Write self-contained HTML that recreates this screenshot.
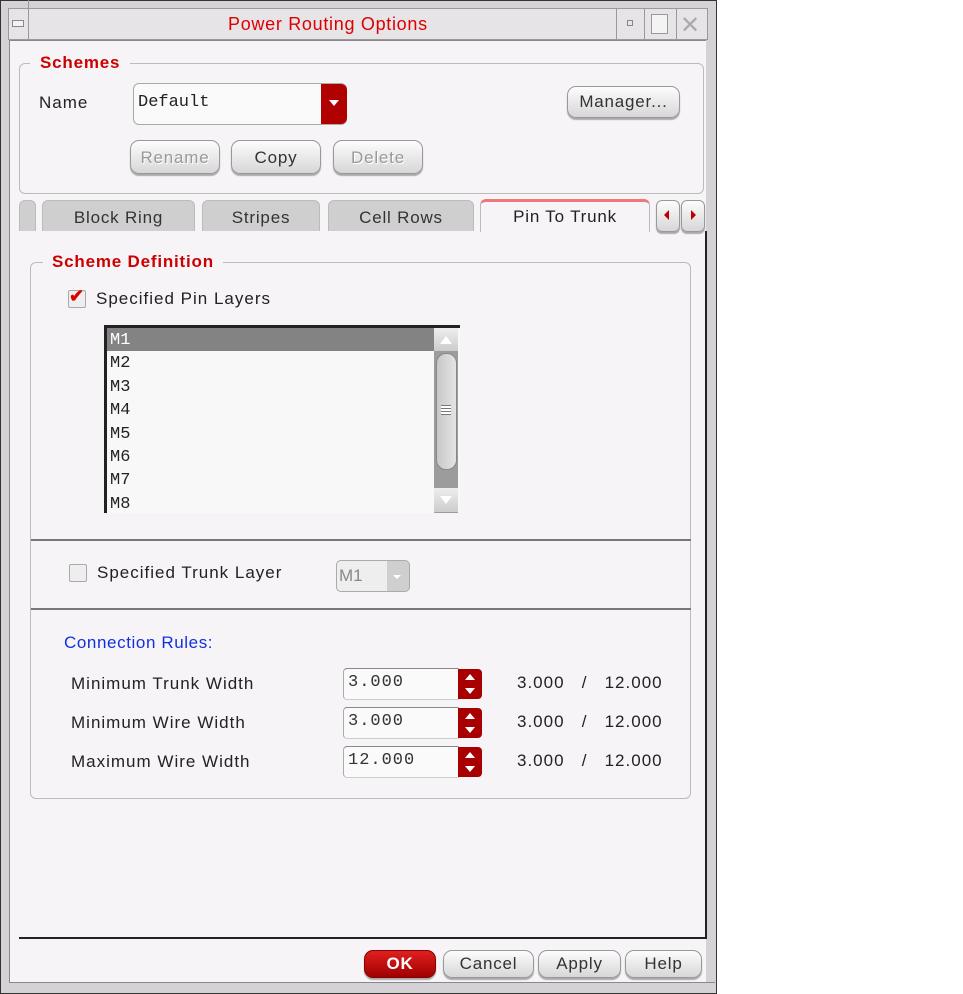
<!DOCTYPE html>
<html><head><style>
*{margin:0;padding:0;box-sizing:border-box}
body{width:963px;height:994px;background:#fff;position:relative;font-family:"Liberation Sans",sans-serif;overflow:hidden}
.a{position:absolute}
.win{left:0;top:0;width:717px;height:994px;background:#d4d2d4;border:1px solid #333}
.inner{left:9px;top:40px;width:697px;height:943px;background:#f7f4f7;border-left:1px solid #888;border-top:1px solid #888}
.t{font-size:17px;color:#222;white-space:nowrap;letter-spacing:1px}
.red{color:#cc0000;font-weight:bold;font-size:17px;letter-spacing:0.8px}
.btn{border:1px solid #999;border-radius:9px;background:linear-gradient(#fdfdfd,#d8d6d8);box-shadow:0 2px 1px #aaa;text-align:center;font-size:17px;color:#333;line-height:30px;letter-spacing:0.8px}
.dis{color:#999;text-shadow:1px 1px 0 #fff}
.tab{background:#d0cfd0;border:1px solid #bbb;border-bottom:none;border-radius:6px 6px 0 0;text-align:center;font-size:17px;color:#333;line-height:34px;letter-spacing:0.8px}
.grp{border:1px solid #bbb;border-radius:6px}
.mono{font-family:"Liberation Mono",monospace}
.spin{width:24px;height:30px;background:#a80000;border-radius:0 4px 4px 0}
.spin:before{content:"";position:absolute;left:7px;top:5px;border-left:5px solid transparent;border-right:5px solid transparent;border-bottom:6px solid #fff}
.spin:after{content:"";position:absolute;left:7px;top:19px;border-left:5px solid transparent;border-right:5px solid transparent;border-top:6px solid #fff}
.field{width:116px;height:32px;background:#fbfafb;border:1px solid #ccc;border-top-color:#888;border-left-color:#aaa;border-radius:4px 0 0 4px;font-size:17px;color:#333;padding:4px 0 0 4px;letter-spacing:1px}
</style></head><body>
<div class="a win"></div>
<div class="a" style="left:8px;top:8px;width:700px;height:32px;background:#e6e4e6;border:1px solid #999"></div>
<div class="a" style="left:28px;top:0;width:1px;height:40px;background:#999"></div>
<div class="a" style="left:12px;top:20px;width:12px;height:7px;border:1px solid #888;background:#f3f3f3"></div>
<div class="a" style="left:228px;top:14px;color:#d00;font-size:18px;letter-spacing:0.7px">Power Routing Options</div>
<div class="a" style="left:616px;top:8px;width:1px;height:32px;background:#999"></div>
<div class="a" style="left:627px;top:20px;width:6px;height:6px;border:1px solid #888"></div>
<div class="a" style="left:644px;top:8px;width:1px;height:32px;background:#999"></div>
<div class="a" style="left:651px;top:14px;width:17px;height:20px;border:1px solid #999;background:#f3f3f3"></div>
<div class="a" style="left:676px;top:8px;width:1px;height:32px;background:#999"></div>
<div class="a" style="left:680px;top:11px;font-size:24px;color:#aaa">✕</div>
<div class="a inner"></div>
<div class="a grp" style="left:19px;top:63px;width:685px;height:131px"></div>
<div class="a red" style="left:30px;top:53px;background:#f7f4f7;padding:0 10px">Schemes</div>
<div class="a t" style="left:39px;top:93px">Name</div>
<div class="a" style="left:133px;top:83px;width:214px;height:42px;border:1px solid #aaa;border-radius:6px;background:#fbfafb"></div>
<div class="a mono" style="left:138px;top:93px;font-size:17px;color:#222">Default</div>
<div class="a" style="left:321px;top:84px;width:26px;height:40px;background:#b00000;border-radius:0 6px 6px 0"></div>
<div class="a" style="left:329px;top:100px;border-left:5px solid transparent;border-right:5px solid transparent;border-top:6px solid #fff"></div>
<div class="a btn" style="left:567px;top:86px;width:113px;height:32px">Manager...</div>
<div class="a btn dis" style="left:130px;top:140px;width:90px;height:34px;line-height:34px">Rename</div>
<div class="a btn" style="left:231px;top:140px;width:90px;height:34px;line-height:34px">Copy</div>
<div class="a btn dis" style="left:333px;top:140px;width:90px;height:34px;line-height:34px">Delete</div>
<div class="a tab" style="left:19px;top:200px;width:17px;height:31px"></div>
<div class="a tab" style="left:42px;top:200px;width:153px;height:31px">Block Ring</div>
<div class="a tab" style="left:202px;top:200px;width:118px;height:31px">Stripes</div>
<div class="a tab" style="left:328px;top:200px;width:146px;height:31px">Cell Rows</div>
<div class="a" style="left:480px;top:199px;width:170px;height:33px;background:#f7f4f7;border:1px solid #bbb;border-top:3px solid #e77;border-bottom:none;border-radius:6px 6px 0 0;text-align:center;font-size:17px;color:#222;line-height:30px;letter-spacing:0.8px">Pin To Trunk</div>
<div class="a btn" style="left:656px;top:200px;width:24px;height:32px;border-radius:6px"></div>
<div class="a" style="left:664px;top:210px;border-top:5px solid transparent;border-bottom:5px solid transparent;border-right:5px solid #b00"></div>
<div class="a btn" style="left:681px;top:200px;width:24px;height:32px;border-radius:6px"></div>
<div class="a" style="left:691px;top:210px;border-top:5px solid transparent;border-bottom:5px solid transparent;border-left:5px solid #b00"></div>
<div class="a" style="left:705px;top:231px;width:2px;height:708px;background:#222"></div>
<div class="a" style="left:19px;top:937px;width:688px;height:2px;background:#222"></div>
<div class="a grp" style="left:30px;top:262px;width:661px;height:537px"></div>
<div class="a red" style="left:43px;top:252px;background:#f7f4f7;padding:0 9px">Scheme Definition</div>
<div class="a" style="left:68px;top:290px;width:18px;height:18px;border:1px solid #aaa;background:#eee;border-radius:2px"></div>
<div class="a" style="left:69px;top:286px;color:#d00;font-size:18px;font-weight:bold">✔</div>
<div class="a t" style="left:96px;top:289px">Specified Pin Layers</div>
<div class="a" style="left:104px;top:325px;width:356px;height:188px;background:#f9f8f9;border-top:3px solid #222;border-left:3px solid #222"></div>
<div class="a" style="left:107px;top:328px;width:327px;height:23px;background:#838383"></div>
<div class="a mono" style="left:110px;top:329px;font-size:17px;line-height:23.4px;color:#222"><span style="color:#fff">M1</span><br>M2<br>M3<br>M4<br>M5<br>M6<br>M7<br>M8</div>
<div class="a" style="left:434px;top:328px;width:24px;height:185px;background:#9c9c9c"></div>
<div class="a" style="left:434px;top:328px;width:24px;height:23px;background:linear-gradient(#eee,#ccc)"></div>
<div class="a" style="left:440px;top:336px;border-left:6px solid transparent;border-right:6px solid transparent;border-bottom:8px solid #fff"></div>
<div class="a" style="left:436px;top:353px;width:21px;height:117px;background:linear-gradient(90deg,#c8c8c8,#e4e4e4);border:1px solid #888;border-radius:10px"></div>
<div class="a" style="left:441px;top:405px;width:10px;height:10px;border-top:1px solid #777;border-bottom:1px solid #777;background:repeating-linear-gradient(#fff 0 2px,#777 2px 3px)"></div>
<div class="a" style="left:434px;top:488px;width:24px;height:24px;background:linear-gradient(#eee,#ccc)"></div>
<div class="a" style="left:440px;top:496px;border-left:6px solid transparent;border-right:6px solid transparent;border-top:8px solid #fff"></div>
<div class="a" style="left:31px;top:539px;width:660px;height:2px;background:#777"></div>
<div class="a" style="left:69px;top:564px;width:18px;height:18px;border:1px solid #aaa;background:#eee;border-radius:2px"></div>
<div class="a t" style="left:97px;top:563px">Specified Trunk Layer</div>
<div class="a" style="left:336px;top:560px;width:74px;height:32px;border:1px solid #aaa;border-radius:5px;background:linear-gradient(90deg,#eee 0 50px,#cfcfcf 50px)"></div>
<div class="a" style="left:339px;top:566px;font-size:17px;color:#888">M1</div>
<div class="a" style="left:393px;top:575px;border-left:4px solid transparent;border-right:4px solid transparent;border-top:4px solid #fff"></div>
<div class="a" style="left:31px;top:608px;width:660px;height:2px;background:#777"></div>
<div class="a" style="left:64px;top:633px;font-size:17px;color:#1030e0;letter-spacing:0.6px">Connection Rules:</div>
<div class="a t" style="left:71px;top:674px">Minimum Trunk Width</div>
<div class="a t" style="left:71px;top:713px">Minimum Wire Width</div>
<div class="a t" style="left:71px;top:752px">Maximum Wire Width</div>
<div class="a field mono" style="left:343px;top:668px">3.000</div>
<div class="a spin" style="left:458px;top:669px"></div>
<div class="a field mono" style="left:343px;top:707px">3.000</div>
<div class="a spin" style="left:458px;top:708px"></div>
<div class="a field mono" style="left:343px;top:746px">12.000</div>
<div class="a spin" style="left:458px;top:747px"></div>
<div class="a t" style="left:517px;top:673px">3.000&nbsp;&nbsp;&nbsp;/&nbsp;&nbsp;&nbsp;12.000</div>
<div class="a t" style="left:517px;top:712px">3.000&nbsp;&nbsp;&nbsp;/&nbsp;&nbsp;&nbsp;12.000</div>
<div class="a t" style="left:517px;top:751px">3.000&nbsp;&nbsp;&nbsp;/&nbsp;&nbsp;&nbsp;12.000</div>
<div class="a btn" style="left:364px;top:950px;width:72px;height:28px;line-height:26px;background:linear-gradient(#e02020,#a00000);border-color:#800;color:#fff;font-weight:bold">OK</div>
<div class="a btn" style="left:443px;top:950px;width:91px;height:28px;line-height:26px">Cancel</div>
<div class="a btn" style="left:538px;top:950px;width:83px;height:28px;line-height:26px">Apply</div>
<div class="a btn" style="left:625px;top:950px;width:77px;height:28px;line-height:26px">Help</div>
<div class="a" style="left:9px;top:982px;width:706px;height:1px;background:#888"></div>
</body></html>
